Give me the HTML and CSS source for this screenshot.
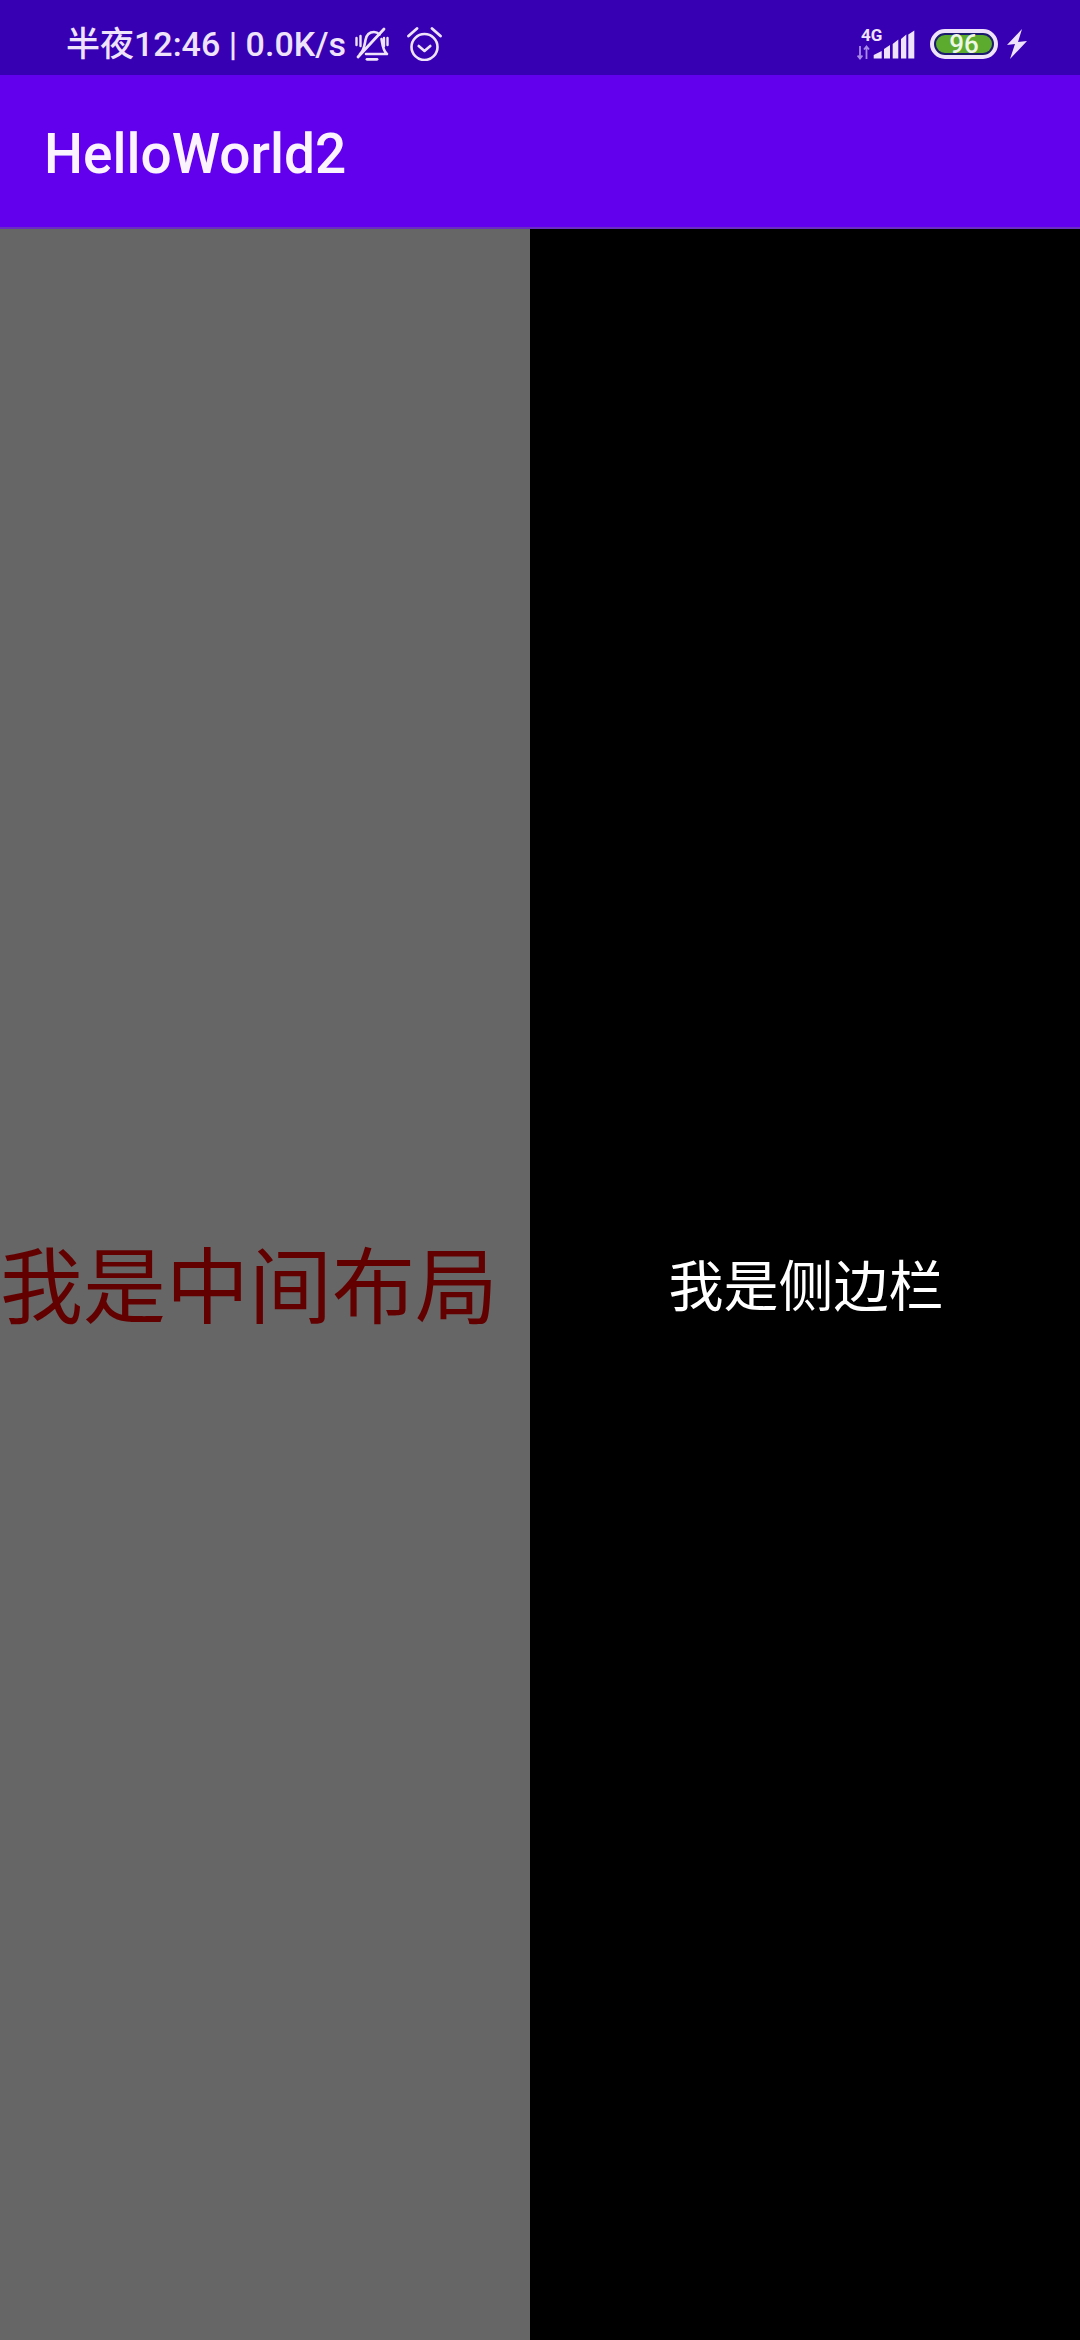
FILE: index.html
```html
<!DOCTYPE html>
<html lang="zh-CN">
<head>
<meta charset="utf-8">
<title>HelloWorld2</title>
<link rel="stylesheet" href="styles.css">
</head>
<body>
<div class="screen">
  <header class="status-bar">
    <div class="status-left">
      <span class="clock">半夜12:46 | 0.0K/s</span>
      <svg class="icon-bell" viewBox="0 0 34 34" fill="none" stroke="currentColor" stroke-linecap="round" stroke-linejoin="round">
        <path stroke-width="2.600" d="M5 27C9 24 9.500 18 10.500 13 11.500 7.500 15 5 19 5 21 5 23 6 24.500 7.500"/>
        <path stroke-width="2.600" d="M26.500 12C27.500 18 28 24 32 27H11"/>
        <path stroke-width="2.800" d="M3 30 29 2"/>
        <path stroke-width="2.400" d="M1.500 11v7M5.500 9v10M29 11v8M32.500 11v7"/>
        <path stroke-width="2.800" d="M12 32.300h10"/>
      </svg>
      <svg class="icon-alarm" viewBox="0 0 35 34" fill="none" stroke="currentColor" stroke-linecap="round" stroke-linejoin="round">
        <circle cx="17.500" cy="20" r="13" stroke-width="2.600"/>
        <path stroke-width="2.600" d="M11.700 19l5.800 5 5.800-5"/>
        <path stroke-width="2.800" d="M1.500 9l8.500-7.500M25 1.500 33.500 9"/>
      </svg>
    </div>
    <div class="status-right">
      <svg class="icon-net" viewBox="0 -6 58 37">
        <text class="net-label" x="4" y="11.500">4G</text>
        <path class="net-arrows" d="M3 17v12.500M.6 26.500l2.400 3 2.400-3M9.500 30V17.500M7 20.500l2.500-3 2.500 3"/>
        <path class="net-bars" d="M16.700 26l8-4v7.500h-8zM27 20l6-4v13.500h-6zM35.700 15l5.600-4.500v19h-5.600zM44 10l5.300-4.500v24h-5.300zM51.300 5.500l6-4v28h-6z"/>
      </svg>
      <div class="battery"><div class="battery-fill">96</div></div>
      <svg class="icon-bolt" viewBox="0 0 20 30">
        <path d="M15 0 0 16l8-1-5 15L20 12l-9 1z"/>
      </svg>
    </div>
  </header>
  <div class="app-bar"><h1 class="app-title">HelloWorld2</h1></div>
  <main class="content">
    <section class="center-pane"><p class="center-text">我是中间布局</p></section>
    <aside class="side-pane"><p class="side-text">我是侧边栏</p></aside>
  </main>
</div>
</body>
</html>
```

FILE: styles.css
```css
* { box-sizing: border-box; }
html, body { margin: 0; padding: 0; }
body { width: 1080px; height: 2340px; overflow: hidden; font-family: Roboto, "Noto Sans CJK SC", sans-serif; }
.screen { width: 1080px; height: 2340px; display: flex; flex-direction: column; }

.status-bar { height: 75px; flex: none; background: #3700b3; color: #efe3fb; display: flex; align-items: center; justify-content: space-between; padding: 13px 53px 0 66px; }
.status-left { display: flex; align-items: center; }
.clock { font-size: 34px; font-weight: 500; line-height: 62px; white-space: nowrap; font-family: Roboto, "Noto Sans CJK SC", sans-serif; }
.icon-bell { width: 34px; height: 34px; margin-left: 9px; }
.icon-alarm { width: 35px; height: 34px; margin-left: 18px; }

.status-right { display: flex; align-items: center; }
.icon-net { width: 58px; height: 37px; display: block; margin-top: -6px; }
.net-label { font: 700 17px Roboto, sans-serif; fill: #efe3fb; }
.net-arrows { fill: none; stroke: #a98ae8; stroke-width: 1.800; }
.net-bars { fill: #efe3fb; }
.battery { width: 68px; height: 30px; margin-left: 15px; border: 4px solid #efe3fb; border-radius: 15px; padding: 2px; background: #1c1a6e; display: flex; }
.battery-fill { flex: 1; background: #5cab2e; border-radius: 9px; color: #eef7e6; font-size: 26px; font-weight: 500; line-height: 18px; text-align: center; }
.icon-bolt { width: 20px; height: 30px; margin-left: 9px; fill: #efe3fb; }

.app-bar { height: 154px; flex: none; background: #6200ee; display: flex; align-items: center; padding: 5px 0 0 44px; border-bottom: 2px solid #6a2fc0; }
.app-title { margin: 0; font-size: 55px; font-weight: 500; color: #fbf4ff; }

.content { flex: 1; display: flex; min-height: 0; }
.center-pane { width: 530px; flex: none; background: #666666; display: flex; align-items: center; padding-bottom: 8px; }
.center-text { margin: 0; font-family: "Noto Sans CJK SC", sans-serif; font-size: 83px; color: #620000; white-space: nowrap; }
.side-pane { flex: 1; background: #000; display: flex; align-items: center; justify-content: center; padding: 0 0 6px 2px; }
.side-text { margin: 0; font-family: "Noto Sans CJK SC", sans-serif; font-size: 55px; color: #fff; }
```
